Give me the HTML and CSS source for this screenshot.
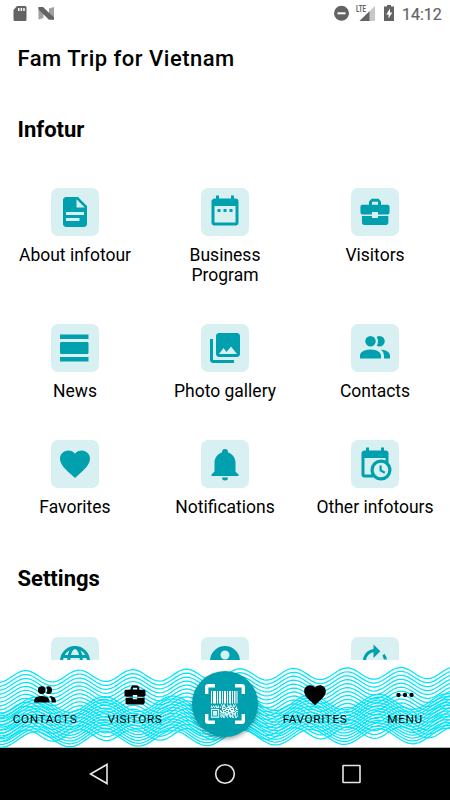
FILE: index.html
```
<!DOCTYPE html>
<html lang="en">
<head>
  <meta charset="UTF-8" />
  <meta name="viewport" content="width=device-width, initial-scale=1.0"/>
  <title>Fam Trip for Vietnam</title>
  <link rel="stylesheet" href="styles.css">
</head>
<body>

<!-- Shared icons -->
<svg class="sprite">
  <symbol id="i-case" viewBox="0 0 24 24">
    <path d="M2.3 8.6c0-.8.6-1.4 1.4-1.4H8V5l1.7-1.8h4.7L16 5v2.2h4.3c.8 0 1.4.6 1.4 1.4v3.5c0 .9-.7 1.6-1.6 1.6H14V12h-4v1.700H3.900c-.9 0-1.600-.7-1.600-1.600zM10 7.200h4V5.200h-4zM3.300 14.600H10V16h4v-1.400h6.900v4.600c0 .8-.7 1.500-1.500 1.500H4.800c-.8 0-1.500-.7-1.500-1.500z"/>
  </symbol>
  <symbol id="i-people" viewBox="0 0 24 24">
    <path d="M16 17v2H2v-2s0-4 7-4 7 4 7 4m-3.500-9.500A3.500 3.500 0 1 0 9 11a3.500 3.500 0 0 0 3.500-3.500m3.440 5.500A5.320 5.320 0 0 1 18 17v2h4v-2s0-3.630-6.060-4M15 4a3.390 3.390 0 0 0-1.930.59 5 5 0 0 1 0 5.820A3.390 3.390 0 0 0 15 11a3.500 3.500 0 0 0 0-7z"/>
  </symbol>
  <symbol id="i-heart" viewBox="0 0 24 24">
    <path d="M12 21.350l-1.450-1.320C5.400 15.360 2 12.280 2 8.500 2 5.420 4.420 3 7.500 3c1.740 0 3.410.81 4.500 2.090C13.090 3.810 14.760 3 16.500 3 19.580 3 22 5.420 22 8.500c0 3.780-3.400 6.860-8.550 11.540L12 21.350z"/>
  </symbol>
</svg>

<header class="status">
  <svg class="status-left" width="44" height="18" viewBox="0 0 44 18">
    <path fill="#636363" d="M4 1h8q1.500 0 1.500 1.500v12q0 1.500-1.500 1.500H2q-1.500 0-1.500-1.500V5z"/>
    <path fill="#fff" d="M5 3h1.500v3H5zM7.600 3h1.500v3H7.600zM10.200 3h1.500v3h-1.500z"/>
    <path fill="#a0a0a0" d="M25.500 2v12.500l5-1.500V5zM41 2v12.500l-5-1.500V3.500z"/>
    <path fill="#636363" d="M25.500 2h4.500l11 10.500v2.200h-5L25.500 4.500z"/>
  </svg>
  <div class="status-right">
    <svg width="64" height="18" viewBox="0 0 64 18">
      <circle cx="8.500" cy="8.300" r="7.500" fill="#636363"/>
      <path d="M4.500 7.300h8v2h-8z" fill="#fff"/>
      <path d="M42 1v15H26.500z" fill="#c8c8c8"/>
      <path d="M36.500 6.300V16h-10z" fill="#636363"/>
      <path d="M20 0h13.500v8.500H20z" fill="#fff"/>
      <text class="lte" x="23" y="7.200" textLength="10" lengthAdjust="spacingAndGlyphs">LTE</text>
      <path fill="#636363" d="M54 0h4v1.500h3V16H51V1.500h3z"/>
      <path fill="#fff" d="M57 3.500v4h2.300L55.500 13.500v-4h-2.300z"/>
    </svg>
    <span>14:12</span>
  </div>
</header>

<main>
  <h1>Fam Trip for Vietnam</h1>

  <!-- Infotur Section -->
  <h2>Infotur</h2>
  <section class="grid">
    <a class="item">
      <svg class="tile" viewBox="0 0 24 24"><path d="M14 2H6c-1.100 0-2 .9-2 2v16c0 1.100.9 2 2 2h12c1.100 0 2-.9 2-2V8l-6-6zM6 12h12v2H6zM6 16h9v2H6zM13 9V3.500L18.500 9H13z" fill-rule="evenodd"/></svg>
      <span>About infotour</span>
    </a>
    <a class="item">
      <svg class="tile" viewBox="0 0 24 24"><path d="M9 10H7v2h2v-2m4 0h-2v2h2v-2m4 0h-2v2h2v-2m2-7h-1V1h-2v2H8V1H6v2H5c-1.110 0-2 .9-2 2v14a2 2 0 0 0 2 2h14a2 2 0 0 0 2-2V5a2 2 0 0 0-2-2m0 16H5V8h14v11z"/></svg>
      <span>Business<br>Program</span>
    </a>
    <a class="item">
      <svg class="tile" viewBox="0 0 24 24"><use href="#i-case"/></svg>
      <span>Visitors</span>
    </a>
    <a class="item">
      <svg class="tile" viewBox="0 0 24 24"><path d="M2 21h19v-3H2v3zM20 8H3c-.55 0-1 .45-1 1v6c0 .55.45 1 1 1h17c.55 0 1-.45 1-1V9c0-.55-.45-1-1-1zM2 3v3h19V3H2z"/></svg>
      <span>News</span>
    </a>
    <a class="item">
      <svg class="tile" viewBox="0 0 24 24"><path d="M22 16V4c0-1.100-.9-2-2-2H8c-1.100 0-2 .9-2 2v12c0 1.100.9 2 2 2h12c1.100 0 2-.9 2-2zm-11-4l2.030 2.710L16 11l4 5H8l3-4zM2 6v14c0 1.100.9 2 2 2h14v-2H4V6H2z"/></svg>
      <span>Photo gallery</span>
    </a>
    <a class="item">
      <svg class="tile" viewBox="0 0 24 24"><use href="#i-people"/></svg>
      <span>Contacts</span>
    </a>
    <a class="item">
      <svg class="tile" viewBox="0 0 24 24"><use href="#i-heart"/></svg>
      <span>Favorites</span>
    </a>
    <a class="item">
      <svg class="tile" viewBox="0 0 24 24"><path d="M21 19v1H3v-1l2-2v-6c0-3.100 2.030-5.830 5-6.710V4a2 2 0 0 1 4 0v.29c2.970.88 5 3.610 5 6.710v6l2 2m-7 2a2 2 0 0 1-4 0"/></svg>
      <span>Notifications</span>
    </a>
    <a class="item">
      <svg class="tile" viewBox="0 0 24 24"><path d="M15 13h1.500v2.820l2.440 1.410-.75 1.300L15 16.690V13m4-5H5v11h4.670c-.43-.91-.67-1.930-.67-3a7 7 0 0 1 7-7c1.070 0 2.090.24 3 .67V8M5 21a2 2 0 0 1-2-2V5c0-1.110.89-2 2-2h1V1h2v2h8V1h2v2h1a2 2 0 0 1 2 2v6.100c1.240 1.260 2 2.990 2 4.900a7 7 0 0 1-7 7c-1.910 0-3.640-.76-4.900-2H5m11-9.850A4.850 4.850 0 0 0 11.150 16c0 2.680 2.170 4.850 4.850 4.850A4.850 4.850 0 0 0 20.850 16c0-2.680-2.170-4.850-4.850-4.850z"/></svg>
      <span>Other infotours</span>
    </a>
  </section>

  <!-- Settings Section -->
  <h2>Settings</h2>
  <section class="grid">
    <a class="item">
      <svg class="tile line" viewBox="0 0 24 24"><circle cx="12" cy="12" r="9"/><ellipse cx="12" cy="12" rx="4.200" ry="9"/><path d="M4 9h16M4 15h16"/></svg>
    </a>
    <a class="item">
      <svg class="tile" viewBox="0 0 24 24"><path d="M12 2a10 10 0 1 0 0 20 10 10 0 0 0 0-20zm0 3a3 3 0 1 1 0 6 3 3 0 0 1 0-6zm0 14.200a7.200 7.200 0 0 1-6-3.220c.03-1.990 4-3.080 6-3.080s5.970 1.090 6 3.080a7.200 7.200 0 0 1-6 3.220z"/></svg>
    </a>
    <a class="item">
      <svg class="tile" viewBox="0 0 24 24"><path d="M19.930 11a7.900 7.900 0 0 0-1.620-3.890l-1.420 1.420c.54.75.88 1.600 1.020 2.470zM15.550 5.550L11 1v3.070C7.060 4.560 4 7.920 4 12s3.050 7.440 7 7.930v-2.020c-2.840-.48-5-2.940-5-5.910s2.160-5.430 5-5.910V10l4.550-4.450z"/></svg>
    </a>
  </section>
</main>

<nav class="tabs">
  <svg class="waves" id="waves" viewBox="0 660 450 88"></svg>
  <a class="tab"><svg viewBox="0 0 24 24"><use href="#i-people"/></svg><span>CONTACTS</span></a>
  <a class="tab"><svg viewBox="0 0 24 24"><use href="#i-case"/></svg><span>VISITORS</span></a>
  <a class="scan">
    <svg id="code" width="40" height="40" viewBox="0 0 40 40">
      <path class="corner" d="M1.700 10V3.200q0-1.500 1.500-1.500H10M30 1.700h6.800q1.500 0 1.500 1.500V10M38.300 30v6.800q0 1.500-1.500 1.500H30M10 38.300H3.200q-1.500 0-1.500-1.500V30"/>
    </svg>
  </a>
  <a class="tab"><svg viewBox="0 0 24 24"><use href="#i-heart"/></svg><span>FAVORITES</span></a>
  <a class="tab"><svg viewBox="0 0 24 24"><circle cx="6" cy="12" r="2"/><circle cx="12" cy="12" r="2"/><circle cx="18" cy="12" r="2"/></svg><span>MENU</span></a>
</nav>

<footer class="system">
  <svg viewBox="0 0 24 24"><path d="M20 2.500v19L3.500 12z"/></svg>
  <svg viewBox="0 0 24 24"><circle cx="12" cy="12" r="9.300"/></svg>
  <svg viewBox="0 0 24 24"><rect x="4" y="3.500" width="17" height="17" rx=".5"/></svg>
</footer>

<script>
  // Waves behind the tab bar
  function wave(y, amp, period, peak) {
    let d = '';
    for (let x = 0; x <= 450; x += 3) {
      const v = y - x * 0.0085 - amp * Math.cos((x - peak) / period * 2 * Math.PI);
      d += (x ? 'L' : 'M') + x + ' ' + v.toFixed(2);
    }
    return `<path d="${d}"/>`;
  }

  let lines = '';
  for (let i = 0; i < 16; i++) lines += wave(676.6 + i * 3.95, 5.8, 53.6, 25.5 + i * 0.05);
  for (let i = 0; i < 13; i++) lines += wave(705.2 + i * 2.87, 7.7, 68.6, 35.5);
  document.getElementById('waves').innerHTML = lines;

  // Barcode and QR pattern in the scan button
  const bars = [[6, 1], [8, 3], [12, 1], [14, 2], [17, 1], [19, 2], [22, 1], [24, 2], [27, 1], [29, 1.500], [31.500, 1]];
  const qr = [
    '..........#.##..#..#..#.#..',
    '#.#.##.#...###...####.##...',
    '##.#.###.#.#..#.###..#...#.',
    '...........###.#..#####.##.',
    '########...#..######..#..##',
    '#......#.#..###..#.####.#..',
    '#.####.#.##.#..###..####.##',
    '#.####.#..#####..#####..#..',
    '#.####.#.#..#.#####..####.#',
    '#.####.#..##.####.##.#.##..',
    '#......#.#.##..#..####..#.#',
    '########..#.##..#..#.##.##.'
  ];
  let marks = '';
  bars.forEach(b => {
    marks += `<rect x="${b[0]}" y="7" width="${b[1]}" height="12.500"/>`;
  });
  qr.forEach((row, y) => {
    [...row].forEach((c, x) => {
      if (c === '#') marks += `<rect x="${6 + x}" y="${20.5 + y * 1.1}" width="1.100" height="1.150"/>`;
    });
  });
  document.getElementById('code').innerHTML += marks;
</script>

</body>
</html>
```
FILE: styles.css
```
* {
  box-sizing: border-box;
}

body {
  font-family: Roboto, sans-serif;
  margin: 0;
  height: 800px;
  display: flex;
  flex-direction: column;
  overflow: hidden;
  background: #fff;
  color: #000;
}

.sprite {
  display: none;
}

.status {
  display: flex;
  justify-content: space-between;
  height: 28px;
  padding: 5px 9px 0 13px;
  flex: none;
}

.status-right {
  display: flex;
  gap: 5px;
  font-size: 16px;
  line-height: 19px;
  color: #636363;
}

.status-right span {
  width: 39px;
  -webkit-text-stroke: 0.2px #636363;
}

.lte {
  font-size: 9px;
  font-weight: 700;
  fill: #636363;
}

main {
  height: 632px;
  flex: none;
  overflow: hidden;
}

h1 {
  margin: 0;
  padding: 16px 17.5px 0;
  font-size: 22px;
  font-weight: 500;
  line-height: 30px;
  letter-spacing: 0.5px;
}

h2 {
  margin: 0;
  padding: 41px 17.5px 43px;
  font-size: 22px;
  font-weight: 700;
  line-height: 30px;
}

.grid {
  display: grid;
  grid-template-columns: repeat(3, 1fr);
  row-gap: 39px;
}

.grid + h2 {
  padding-top: 47px;
}

.item {
  display: flex;
  flex-direction: column;
  align-items: center;
  gap: 9px;
  font-size: 17.5px;
  line-height: 20px;
  text-align: center;
}

.tile {
  width: 48px;
  height: 48px;
  padding: 6px;
  border-radius: 7px;
  background: #d9f0f2;
  fill: #00a0ae;
}

.line {
  fill: none;
  stroke: #00a0ae;
  stroke-width: 2;
}

.tabs {
  position: relative;
  display: grid;
  grid-template-columns: repeat(5, 1fr);
  height: 88px;
  flex: none;
  border-bottom: 1px solid #b5b5b5;
}

.waves {
  position: absolute;
  inset: 0;
  width: 450px;
  height: 88px;
  fill: none;
  stroke: #00e5f8;
  stroke-width: 1.25;
}

.tab {
  position: relative;
  display: flex;
  flex-direction: column;
  align-items: center;
  padding-top: 22px;
  font-size: 11.8px;
  line-height: 14px;
  letter-spacing: 0.6px;
}

.tab svg {
  width: 26px;
  height: 26px;
  margin-bottom: 4px;
}

.scan {
  position: relative;
  display: flex;
  align-items: center;
  justify-content: center;
  justify-self: center;
  width: 66px;
  height: 66px;
  margin-top: 11px;
  border-radius: 50%;
  background: #00a0ae;
  fill: #fff;
  box-shadow: 0 2px 4px rgba(0, 0, 0, 0.35);
}

.corner {
  fill: none;
  stroke: #fff;
  stroke-width: 3.4;
}

.system {
  display: flex;
  justify-content: space-between;
  align-items: center;
  height: 52px;
  padding: 0 87px;
  background: #000;
}

.system svg {
  width: 24px;
  height: 24px;
  fill: none;
  stroke: #e8e8e8;
  stroke-width: 1.6;
}
```
